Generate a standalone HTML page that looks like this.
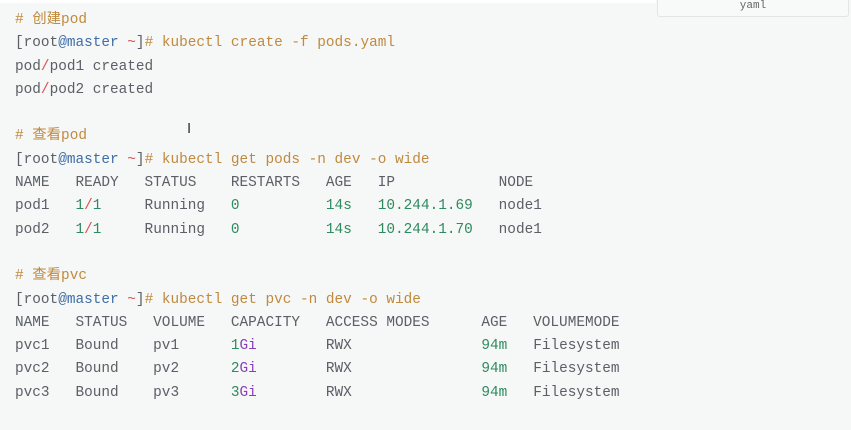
<!DOCTYPE html>
<html><head><meta charset="utf-8"><style>
html,body{margin:0;padding:0;width:851px;height:430px;overflow:hidden;background:#f6f7f7;}
.top{position:absolute;left:0;top:0;width:656px;height:3px;background:#fff;}
.tab{position:absolute;left:657px;top:-2px;width:190px;height:17px;background:#f8f9f9;border:1px solid #e2e4e6;border-radius:0 0 3px 3px;font:11px "Liberation Mono",monospace;color:#666;text-align:center;line-height:14px;}
pre{position:absolute;left:15px;top:9px;margin:0;font-family:"Liberation Mono","Noto Sans CJK SC",monospace;font-size:14.4px;line-height:23.3px;color:#5b6066;}
.c{color:#c08a3e}.b{color:#3f6ea8}.r{color:#d9534f}.g{color:#2f8a5f}.p{color:#8a3fb8}
.cur{position:absolute;left:187px;top:120px;font:15px "Liberation Sans",sans-serif;color:#333;}
</style></head><body>
<div class="top"></div>
<div class="tab">yaml</div>
<pre><span class="c"># 创建pod</span>
[root<span class="b">@master</span> <span class="r">~</span>]<span class="c"># kubectl create -f pods.yaml</span>
pod<span class="r">/</span>pod1 created
pod<span class="r">/</span>pod2 created

<span class="c"># 查看pod</span>
[root<span class="b">@master</span> <span class="r">~</span>]<span class="c"># kubectl get pods -n dev -o wide</span>
NAME   READY   STATUS    RESTARTS   AGE   IP            NODE
pod1   <span class="g">1</span><span class="r">/</span><span class="g">1</span>     Running   <span class="g">0</span>          <span class="g">14s</span>   <span class="g">10.244.1.69</span>   node1
pod2   <span class="g">1</span><span class="r">/</span><span class="g">1</span>     Running   <span class="g">0</span>          <span class="g">14s</span>   <span class="g">10.244.1.70</span>   node1

<span class="c"># 查看pvc</span>
[root<span class="b">@master</span> <span class="r">~</span>]<span class="c"># kubectl get pvc -n dev -o wide</span>
NAME   STATUS   VOLUME   CAPACITY   ACCESS MODES      AGE   VOLUMEMODE
pvc1   Bound    pv1      <span class="g">1</span><span class="p">Gi</span>        RWX               <span class="g">94m</span>   Filesystem
pvc2   Bound    pv2      <span class="g">2</span><span class="p">Gi</span>        RWX               <span class="g">94m</span>   Filesystem
pvc3   Bound    pv3      <span class="g">3</span><span class="p">Gi</span>        RWX               <span class="g">94m</span>   Filesystem</pre>
<div class="cur">I</div>
</body></html>
